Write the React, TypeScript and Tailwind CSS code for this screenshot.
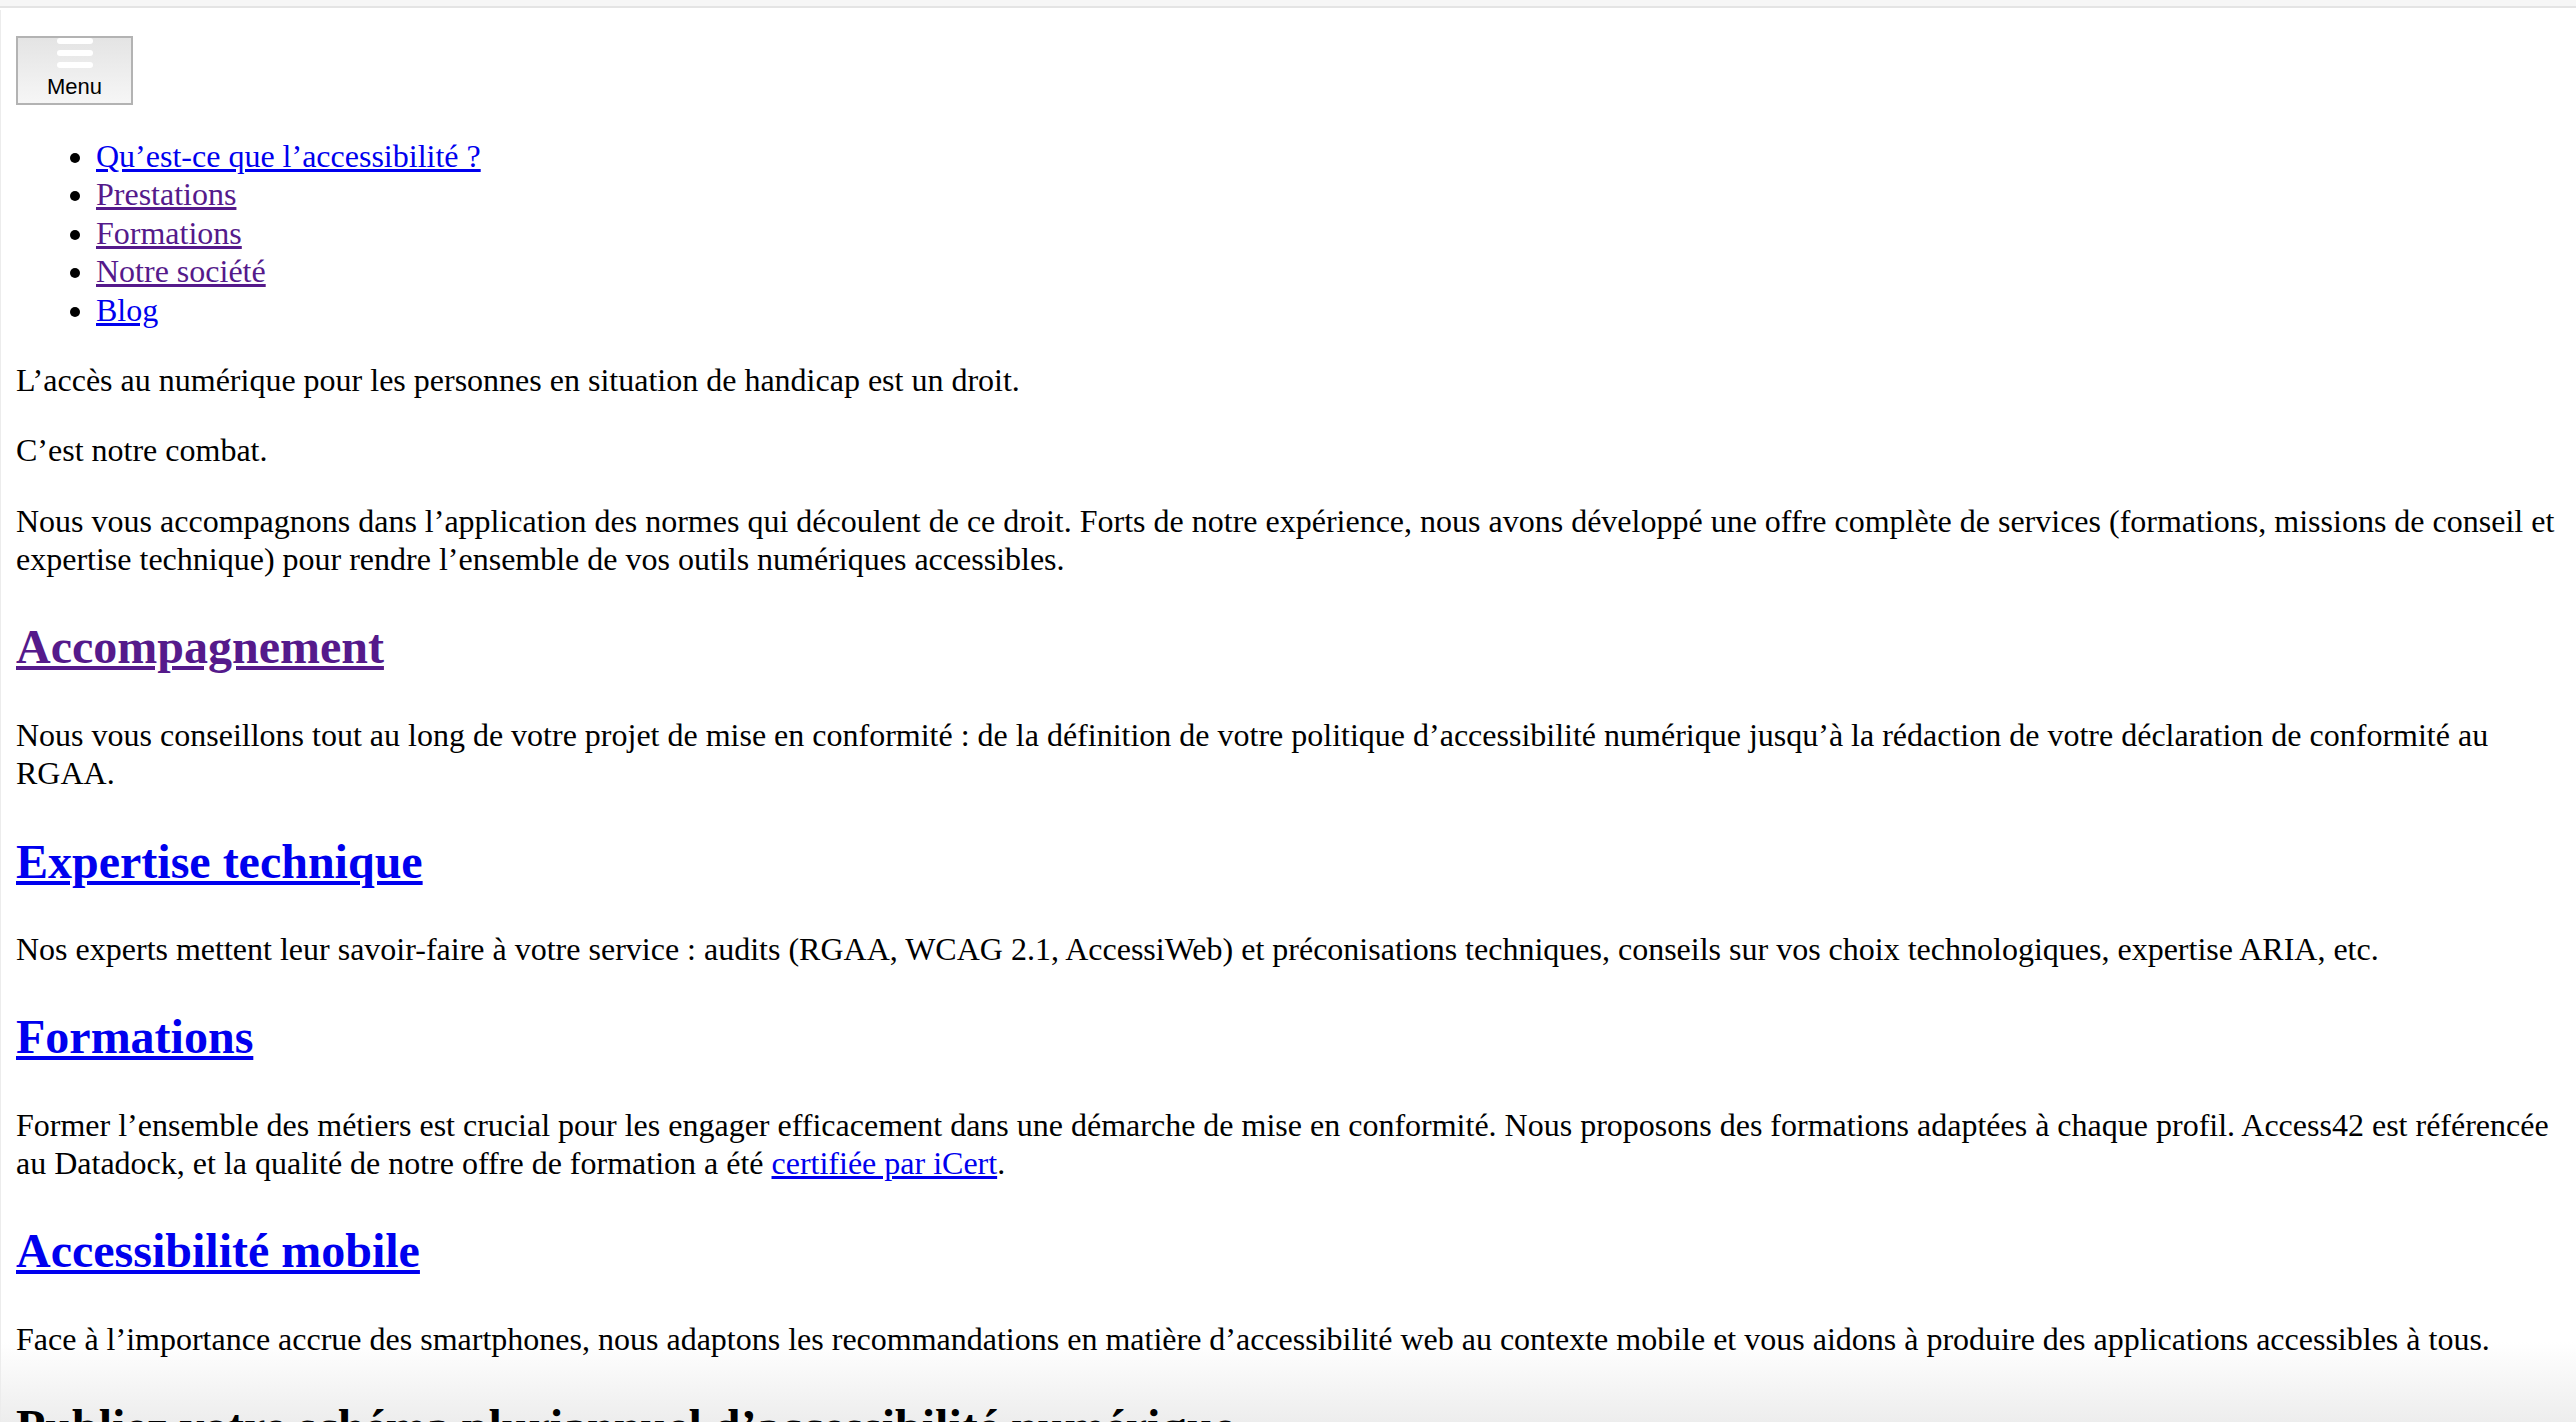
const navLinks = [
  { label: "Qu’est-ce que l’accessibilité\u00a0?", visited: false },
  { label: "Prestations", visited: true },
  { label: "Formations", visited: true },
  { label: "Notre société", visited: true },
  { label: "Blog", visited: false },
];

const linkColor = (visited: boolean) =>
  visited ? "text-[#551a8b] underline" : "text-[#0000ee] underline";

function MenuButton() {
  return (
    <button
      type="button"
      className="flex flex-col items-center w-[117px] h-[69px] border-2 border-[#b3b3b3] bg-gradient-to-b from-[#e4e4e4] to-[#f6f6f6]"
    >
      <span className="flex flex-col gap-[6px]">
        <span className="block w-[36px] h-[6px] rounded-full bg-white" />
        <span className="block w-[36px] h-[6px] rounded-full bg-white" />
        <span className="block w-[36px] h-[6px] rounded-full bg-white" />
      </span>
      <span className="mt-[6px] text-[22px] leading-[26px] text-black font-['Liberation_Sans',Arial,sans-serif]">
        Menu
      </span>
    </button>
  );
}

function Section({
  title,
  visited,
  children,
}: {
  title: string;
  visited: boolean;
  children: React.ReactNode;
}) {
  return (
    <>
      <h2 className="my-[39.84px] text-[48px] leading-[57.6px] font-bold">
        <a href="#" className={linkColor(visited)}>
          {title}
        </a>
      </h2>
      <p className="my-[32px]">{children}</p>
    </>
  );
}

export default function App() {
  return (
    <div className="relative h-[1422px] overflow-hidden bg-white text-black text-[32px] leading-[38.4px] font-['Liberation_Serif','Times_New_Roman',serif]">
      {/* window frame: bottom fade sits behind the text, plus a thin left edge */}
      <div className="pointer-events-none absolute inset-x-0 bottom-0 h-[80px] bg-gradient-to-b from-white to-[#ededed]" />
      <div className="pointer-events-none absolute left-0 top-[10px] bottom-0 w-px bg-[#ececec]" />

      <div className="relative h-[8px] bg-[#f6f6f6] border-b-2 border-[#e4e4e4]" />
      <div className="relative px-[16px] pt-[28px]">
        <MenuButton />
        <ul className="my-[32px] pl-[80px] list-disc">
          {navLinks.map((link) => (
            <li key={link.label}>
              <a href="#" className={linkColor(link.visited)}>
                {link.label}
              </a>
            </li>
          ))}
        </ul>
        <p className="my-[32px]">
          L’accès au numérique pour les personnes en situation de handicap est un droit.
        </p>
        <p className="my-[32px]">C’est notre combat.</p>
        <p className="my-[32px]">
          Nous vous accompagnons dans l’application des normes qui découlent de ce droit.
          Forts de notre expérience, nous avons développé une offre complète de services
          (formations, missions de conseil et expertise technique) pour rendre l’ensemble
          de vos outils numériques accessibles.
        </p>

        <Section title="Accompagnement" visited>
          Nous vous conseillons tout au long de votre projet de mise en conformité&nbsp;: de
          la définition de votre politique d’accessibilité numérique jusqu’à la rédaction de
          votre déclaration de conformité au RGAA.
        </Section>
        <Section title="Expertise technique" visited={false}>
          Nos experts mettent leur savoir-faire à votre service&nbsp;: audits (RGAA, WCAG 2.1,
          AccessiWeb) et préconisations techniques, conseils sur vos choix technologiques,
          expertise ARIA, etc.
        </Section>
        <Section title="Formations" visited={false}>
          Former l’ensemble des métiers est crucial pour les engager efficacement dans une
          démarche de mise en conformité. Nous proposons des formations adaptées à chaque
          profil. Access42 est référencée au Datadock, et la qualité de notre offre de
          formation a été{" "}
          <a href="#" className="text-[#0000ee] underline">
            certifiée par iCert
          </a>
          .
        </Section>
        <Section title="Accessibilité mobile" visited={false}>
          Face à l’importance accrue des smartphones, nous adaptons les recommandations en
          matière d’accessibilité web au contexte mobile et vous aidons à produire des
          applications accessibles à tous.
        </Section>
        <h2 className="my-[39.84px] text-[48px] leading-[57.6px] font-bold">
          Publiez votre schéma pluriannuel d’accessibilité numérique
        </h2>
      </div>
    </div>
  );
}
